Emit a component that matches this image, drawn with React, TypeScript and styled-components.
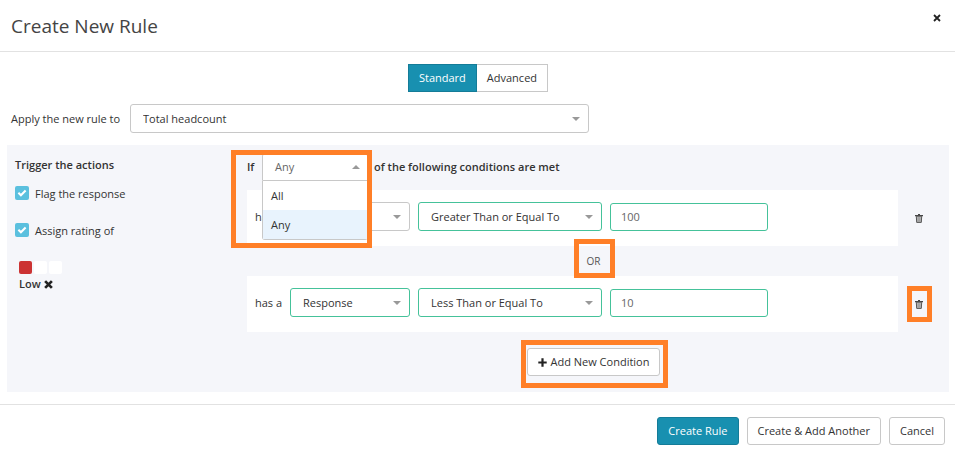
import React, { useState } from "react";
import styled, { createGlobalStyle, css } from "styled-components";

const GlobalStyle = createGlobalStyle`
  *, *::before, *::after { box-sizing: border-box; }
  body {
    margin: 0;
    background: #fff;
    color: #333;
    font: 11px/16px "Open Sans", "Noto Sans", sans-serif;
  }
  button, input, select { font: inherit; color: inherit; margin: 0; }
  button { cursor: pointer; }
`;

const teal = "#1890b0";
const green = "#45c29a";
const grey = "#c8c8c8";

const Dialog = styled.form`
  display: flex;
  flex-direction: column;
`;

const Header = styled.header`
  display: flex;
  align-items: flex-start;
  justify-content: space-between;
  height: 52px;
  padding: 11px 11px 0 11px;
  border-bottom: 1px solid #e2e2e2;
`;

const Title = styled.h1`
  margin: 0;
  font-size: 19px;
  line-height: 30px;
  font-weight: 400;
  color: #444;
`;

const IconButton = styled.button`
  display: flex;
  align-items: center;
  justify-content: center;
  padding: 3px;
  border: 0;
  background: none;
  color: #222;
`;

const Body = styled.main`
  padding: 12px 6px 12px 7px;
`;

const Tabs = styled.div`
  display: flex;
  justify-content: center;
`;

const Tab = styled.button<{ $active?: boolean }>`
  height: 28px;
  padding: 0 10px;
  border: 1px solid ${(p) => (p.$active ? "#147c98" : grey)};
  border-left-width: ${(p) => (p.$active ? "1px" : "0")};
  background: ${(p) => (p.$active ? teal : "#fff")};
  color: ${(p) => (p.$active ? "#fff" : "#333")};
`;

const ApplyRow = styled.div`
  display: grid;
  grid-template-columns: 119px minmax(0, 459px);
  align-items: center;
  margin: 12px 0 12px 4px;
`;

const SelectBox = styled.span`
  display: grid;
  align-items: center;

  > * { grid-area: 1 / 1; }
  > svg {
    justify-self: end;
    margin-right: 9px;
    pointer-events: none;
  }
`;

const fieldBox = css<{ $valid?: boolean }>`
  width: 100%;
  border: 1px solid ${(p) => (p.$valid ? green : grey)};
  border-radius: 3px;
  background: #fff;
  outline: none;
`;

const NativeSelect = styled.select<{ $valid?: boolean }>`
  ${fieldBox}
  height: 29px;
  padding: 0 24px 0 12px;
  appearance: none;
`;

const TextInput = styled.input<{ $valid?: boolean }>`
  ${fieldBox}
  height: 28px;
  padding: 0 10px;
  color: #666;
`;

const Panel = styled.section`
  display: grid;
  grid-template-columns: 232px minmax(0, 1fr);
  padding: 8px 9px 16px 8px;
  background: #f5f6fa;
`;

const Actions = styled.div`
  padding-top: 4px;
`;

const Subtitle = styled.h2`
  margin: 0;
  font-size: 11px;
  line-height: 16px;
  font-weight: 600;
`;

const CheckLabel = styled.label`
  display: flex;
  align-items: flex-start;
  height: 37px;
  gap: 6px;
`;

const CheckList = styled.div`
  padding-top: 13px;
`;

const CheckBox = styled.span`
  display: grid;
  width: 14px;
  height: 14px;

  > * { grid-area: 1 / 1; place-self: center; }
  > svg { pointer-events: none; }
`;

const CheckInput = styled.input`
  width: 14px;
  height: 14px;
  margin: 0;
  appearance: none;
  border-radius: 2px;
  background: #fff;

  &:checked { background: #5bc0de; }
`;

const Rating = styled.div`
  padding: 1px 0 0 4px;
`;

const Swatches = styled.div`
  display: flex;
  gap: 2px;
`;

const Swatch = styled.button<{ $color: string }>`
  width: 13px;
  height: 13px;
  padding: 0;
  border: 0;
  border-radius: 2px;
  background: ${(p) => p.$color};
`;

const RatingName = styled.div`
  display: flex;
  align-items: center;
  gap: 3px;
  margin-top: 2px;
  font-weight: 600;
`;

const ClearButton = styled(IconButton)`
  padding: 0;
`;

const Conditions = styled.div`
  display: flex;
  flex-direction: column;
`;

const MatchRow = styled.div`
  display: grid;
  grid-template-columns: 15px 106px 1fr;
  align-items: center;
  height: 28px;
  margin-bottom: 9px;
  font-weight: 600;
`;

const MatchText = styled.span`
  padding-left: 6px;
`;

const Dropdown = styled.div`
  position: relative;
  font-weight: 400;
`;

const DropdownButton = styled.button`
  display: flex;
  align-items: center;
  justify-content: space-between;
  width: 100%;
  height: 28px;
  padding: 0 7px 0 12px;
  border: 1px solid ${grey};
  border-radius: 3px 3px 0 0;
  background: #fff;
  color: #666;
`;

const Menu = styled.ul`
  position: absolute;
  z-index: 1;
  top: 100%;
  left: 0;
  right: 0;
  margin: 0;
  padding: 0;
  list-style: none;
  border: 1px solid ${grey};
  border-top: 0;
  border-radius: 0 0 3px 3px;
  background: #fff;
`;

const Option = styled.li<{ $active?: boolean }>`
  height: 29px;
  padding: 0 8px;
  line-height: 29px;
  background: ${(p) => (p.$active ? "#e8f3fd" : "#fff")};
`;

const ConditionRow = styled.div`
  display: grid;
  grid-template-columns: minmax(0, 1fr) 42px;
  align-items: center;
  justify-items: center;
`;

const ConditionCard = styled.div`
  display: grid;
  grid-template-columns: 27px 120px 184px 158px;
  column-gap: 8px;
  align-items: center;
  width: 100%;
  padding: 12px 8px 15px;
  background: #fff;
  white-space: nowrap;
`;

const Joiner = styled.div`
  display: flex;
  align-items: center;
  justify-content: center;
  height: 30px;
  font-size: 10px;
  color: #555;
`;

const AddRow = styled.div`
  display: flex;
  justify-content: center;
  padding-top: 16px;
`;

const Marked = styled.span`
  position: relative;
  display: inline-flex;
`;

const Marker = styled.span<{ $inset: string }>`
  position: absolute;
  z-index: 2;
  inset: ${(p) => p.$inset};
  border: 5px solid #ff7f27;
  pointer-events: none;
`;

const Button = styled.button<{ $primary?: boolean }>`
  display: inline-flex;
  align-items: center;
  gap: 4px;
  height: 28px;
  padding: 0 10px;
  border: 1px solid ${(p) => (p.$primary ? "#147c98" : grey)};
  border-radius: 3px;
  background: ${(p) => (p.$primary ? teal : "#fff")};
  color: ${(p) => (p.$primary ? "#fff" : "#333")};
  white-space: nowrap;
`;

const Footer = styled.footer`
  display: flex;
  justify-content: flex-end;
  gap: 8px;
  padding: 12px 10px;
  border-top: 1px solid #e2e2e2;
`;

const Caret = ({ up }: { up?: boolean }) => (
  <svg width="8" height="4" viewBox="0 0 8 4" aria-hidden="true">
    <path d={up ? "M0 4L4 0L8 4Z" : "M0 0H8L4 4Z"} fill="#999" />
  </svg>
);

const Cross = ({ size, weight }: { size: number; weight: number }) => (
  <svg width={size} height={size} viewBox="0 0 8 8" aria-hidden="true">
    <path d="M1 1L7 7M7 1L1 7" stroke="currentColor" strokeWidth={weight} />
  </svg>
);

const Tick = () => (
  <svg width="10" height="8" viewBox="0 0 10 8" aria-hidden="true">
    <path d="M1.4 3.8L3.9 6.2L8.6 1.5" fill="none" stroke="#fff" strokeWidth="2.1" />
  </svg>
);

const Plus = () => (
  <svg width="9" height="9" viewBox="0 0 9 9" aria-hidden="true">
    <path d="M4.5 0.3V8.7M0.3 4.5H8.7" stroke="#222" strokeWidth="2.2" />
  </svg>
);

const Trash = () => (
  <svg width="8" height="9" viewBox="0 0 8 9" aria-hidden="true">
    <path d="M3 0H5V1H8V2.2H0V1H3Z" fill="#444" />
    <path d="M1.3 2.2H6.7L6.3 8.4H1.7Z" fill="#bbb" stroke="#555" />
    <path d="M3.2 3.2V7.6M4.8 3.2V7.6" stroke="#888" strokeWidth="0.7" />
  </svg>
);

interface SelectProps {
  label?: string;
  id?: string;
  options: string[];
  valid?: boolean;
}

const Select = ({ label, id, options, valid }: SelectProps) => (
  <SelectBox>
    <NativeSelect id={id} aria-label={label} $valid={valid}>
      {options.map((o) => (
        <option key={o}>{o}</option>
      ))}
    </NativeSelect>
    <Caret />
  </SelectBox>
);

interface ConditionProps {
  operator: string;
  amount: string;
  subjectValid?: boolean;
  marked?: boolean;
}

const Condition = ({ operator, amount, subjectValid, marked }: ConditionProps) => (
  <ConditionRow>
    <ConditionCard>
      <span>has a</span>
      <Select label="Subject" options={["Response"]} valid={subjectValid} />
      <Select label="Operator" options={[operator]} valid />
      <TextInput aria-label="Value" defaultValue={amount} $valid />
    </ConditionCard>
    <Marked>
      <IconButton type="button" aria-label="Delete condition">
        <Trash />
      </IconButton>
      {marked && <Marker $inset="-11px -6px -10px -5px" />}
    </Marked>
  </ConditionRow>
);

const Check = ({ text }: { text: string }) => (
  <CheckLabel>
    <CheckBox>
      <CheckInput type="checkbox" defaultChecked />
      <Tick />
    </CheckBox>
    <span>{text}</span>
  </CheckLabel>
);

export default function App() {
  const [match, setMatch] = useState("Any");

  return (
    <Dialog onSubmit={(e) => e.preventDefault()}>
      <GlobalStyle />
      <Header>
        <Title>Create New Rule</Title>
        <IconButton type="button" aria-label="Close">
          <Cross size={8} weight={1.8} />
        </IconButton>
      </Header>
      <Body>
        <Tabs>
          <Tab type="button" $active>Standard</Tab>
          <Tab type="button">Advanced</Tab>
        </Tabs>
        <ApplyRow>
          <label htmlFor="target">Apply the new rule to</label>
          <Select id="target" options={["Total headcount"]} />
        </ApplyRow>
        <Panel>
          <Actions>
            <Subtitle>Trigger the actions</Subtitle>
            <CheckList>
              <Check text="Flag the response" />
              <Check text="Assign rating of" />
            </CheckList>
            <Rating>
              <Swatches>
                <Swatch type="button" aria-label="Low" $color="#cc3333" />
                <Swatch type="button" aria-label="Medium" $color="#fff" />
                <Swatch type="button" aria-label="High" $color="#fff" />
              </Swatches>
              <RatingName>
                Low
                <ClearButton type="button" aria-label="Clear rating">
                  <Cross size={9} weight={2.4} />
                </ClearButton>
              </RatingName>
            </Rating>
          </Actions>
          <Conditions>
            <MatchRow>
              <span>If</span>
              <Dropdown>
                <DropdownButton type="button" aria-haspopup="listbox" aria-expanded="true">
                  {match}
                  <Caret up />
                </DropdownButton>
                <Menu role="listbox" aria-label="Match">
                  {["All", "Any"].map((o) => (
                    <Option
                      key={o}
                      role="option"
                      aria-selected={o === match}
                      $active={o === match}
                      onClick={() => setMatch(o)}
                    >
                      {o}
                    </Option>
                  ))}
                </Menu>
                <Marker $inset="-3px -4px -67px -31px" />
              </Dropdown>
              <MatchText>of the following conditions are met</MatchText>
            </MatchRow>
            <Condition operator="Greater Than or Equal To" amount="100" />
            <Joiner>
              <Marked>
                OR
                <Marker $inset="-14px -15px -9px -13px" />
              </Marked>
            </Joiner>
            <Condition operator="Less Than or Equal To" amount="10" subjectValid marked />
            <AddRow>
              <Marked>
                <Button type="button">
                  <Plus />
                  Add New Condition
                </Button>
                <Marker $inset="-8px -8px -12px -6px" />
              </Marked>
            </AddRow>
          </Conditions>
        </Panel>
      </Body>
      <Footer>
        <Button type="submit" $primary>Create Rule</Button>
        <Button type="button">Create &amp; Add Another</Button>
        <Button type="button">Cancel</Button>
      </Footer>
    </Dialog>
  );
}
